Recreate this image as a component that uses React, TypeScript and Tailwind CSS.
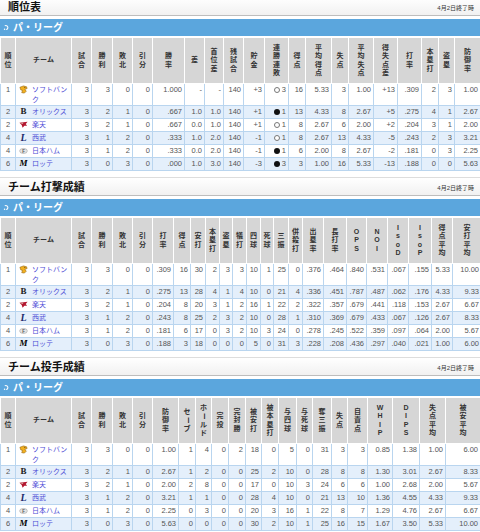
import type { ReactNode } from "react";

type Col = { label: string; w: string; flat?: boolean };
type Logo = "sb" | "bs" | "e" | "l" | "f" | "m";
type Row = { rank: string; team: string; logo: Logo; cells: string[] };

const BASE_COLS: Col[] = [
  { label: "順位", w: "w-[15px]" },
  { label: "チーム", w: "w-[56px]", flat: true },
  { label: "試合", w: "w-[20px]" },
  { label: "勝利", w: "w-[21px]" },
  { label: "敗北", w: "w-[20px]" },
  { label: "引分", w: "w-[20px]" },
];

const STANDING_COLS: Col[] = [
  ...BASE_COLS,
  { label: "勝率", w: "w-[32px]" },
  { label: "差", w: "w-[20px]" },
  { label: "首位差", w: "w-[19px]" },
  { label: "残試合", w: "w-[20px]" },
  { label: "貯金", w: "w-[21px]" },
  { label: "連勝連敗", w: "w-[24px]" },
  { label: "得点", w: "w-[17px]" },
  { label: "平均得点", w: "w-[26px]" },
  { label: "失点", w: "w-[17px]" },
  { label: "平均失点", w: "w-[25px]" },
  { label: "得失点差", w: "w-[24px]" },
  { label: "打率", w: "w-[24px]" },
  { label: "本塁打", w: "w-[17px]" },
  { label: "盗塁", w: "w-[16px]" },
  { label: "防御率", w: "w-[26px]" },
];

const BATTING_COLS: Col[] = [
  ...BASE_COLS,
  { label: "打率", w: "w-[21px]" },
  { label: "得点", w: "w-[17px]" },
  { label: "安打", w: "w-[15px]" },
  { label: "本塁打", w: "w-[14px]" },
  { label: "盗塁", w: "w-[13px]" },
  { label: "犠打", w: "w-[14px]" },
  { label: "四球", w: "w-[14px]" },
  { label: "死球", w: "w-[13px]" },
  { label: "三振", w: "w-[15px]" },
  { label: "併殺打", w: "w-[14px]" },
  { label: "出塁率", w: "w-[21px]" },
  { label: "長打率", w: "w-[23px]" },
  { label: "OPS", w: "w-[20px]" },
  { label: "NOI", w: "w-[21px]" },
  { label: "IsoD", w: "w-[21px]" },
  { label: "IsoP", w: "w-[23px]" },
  { label: "得点平均", w: "w-[21px]" },
  { label: "安打平均", w: "w-[29px]" },
];

const PITCHING_COLS: Col[] = [
  ...BASE_COLS,
  { label: "防御率", w: "w-[26px]" },
  { label: "セーブ", w: "w-[17px]" },
  { label: "ホールド", w: "w-[16px]" },
  { label: "完投", w: "w-[17px]" },
  { label: "完封勝", w: "w-[17px]" },
  { label: "被安打", w: "w-[16px]" },
  { label: "被本塁打", w: "w-[17px]" },
  { label: "与四球", w: "w-[18px]" },
  { label: "与死球", w: "w-[16px]" },
  { label: "奪三振", w: "w-[19px]" },
  { label: "失点", w: "w-[16px]" },
  { label: "自責点", w: "w-[20px]" },
  { label: "WHIP", w: "w-[25px]" },
  { label: "DIPS", w: "w-[27px]" },
  { label: "失点平均", w: "w-[26px]" },
  { label: "被安平均", w: "w-[35px]" },
];

const TEAMS: { rank: string; team: string; logo: Logo }[] = [
  { rank: "1", team: "ソフトバンク", logo: "sb" },
  { rank: "2", team: "オリックス", logo: "bs" },
  { rank: "2", team: "楽天", logo: "e" },
  { rank: "4", team: "西武", logo: "l" },
  { rank: "4", team: "日本ハム", logo: "f" },
  { rank: "6", team: "ロッテ", logo: "m" },
];

const STANDING_DATA = [
  "3 3 0 0 1.000 - - 140 +3 ○3 16 5.33 3 1.00 +13 .309 2 3 1.00",
  "3 2 1 0 .667 1.0 1.0 140 +1 ●1 13 4.33 8 2.67 +5 .275 4 1 2.67",
  "3 2 1 0 .667 0.0 1.0 140 +1 ○1 8 2.67 6 2.00 +2 .204 3 1 2.00",
  "3 1 2 0 .333 1.0 2.0 140 -1 ○1 8 2.67 13 4.33 -5 .243 2 3 3.21",
  "3 1 2 0 .333 0.0 2.0 140 -1 ●1 6 2.00 8 2.67 -2 .181 0 3 2.25",
  "3 0 3 0 .000 1.0 3.0 140 -3 ●3 3 1.00 16 5.33 -13 .188 0 0 5.63",
];

const BATTING_DATA = [
  "3 3 0 0 .309 16 30 2 3 3 10 1 25 0 .376 .464 .840 .531 .067 .155 5.33 10.00",
  "3 2 1 0 .275 13 28 4 1 4 10 0 21 4 .336 .451 .787 .487 .062 .176 4.33 9.33",
  "3 2 1 0 .204 8 20 3 1 2 16 1 22 2 .322 .357 .679 .441 .118 .153 2.67 6.67",
  "3 1 2 0 .243 8 25 2 3 2 10 0 28 1 .310 .369 .679 .433 .067 .126 2.67 8.33",
  "3 1 2 0 .181 6 17 0 3 2 10 3 24 0 .278 .245 .522 .359 .097 .064 2.00 5.67",
  "3 0 3 0 .188 3 18 0 0 0 5 0 31 3 .228 .208 .436 .297 .040 .021 1.00 6.00",
];

const PITCHING_DATA = [
  "3 3 0 0 1.00 1 4 0 2 18 0 5 0 31 3 3 0.85 1.38 1.00 6.00",
  "3 2 1 0 2.67 1 2 0 0 25 2 10 0 28 8 8 1.30 3.01 2.67 8.33",
  "3 2 1 0 2.00 2 8 0 0 17 0 10 3 24 6 6 1.00 2.68 2.00 5.67",
  "3 1 2 0 3.21 1 1 0 0 28 4 10 0 21 13 10 1.36 4.55 4.33 9.33",
  "3 1 2 0 2.25 0 3 0 0 20 3 16 1 22 8 7 1.29 4.76 2.67 6.67",
  "3 0 3 0 5.63 0 0 0 0 30 2 10 1 25 16 15 1.67 3.50 5.33 10.00",
];

function toRows(data: string[]): Row[] {
  return data.map((line, i) => ({ ...TEAMS[i], cells: line.split(" ") }));
}

function TeamLogo({ kind }: { kind: Logo }) {
  if (kind === "sb")
    return (
      <svg viewBox="0 0 10 10" className="h-[9px] w-[9px] shrink-0">
        <path d="M1 2.5 L5 1 L8.5 2 L9 4 L6.5 4.5 L8 7 L6 9 L3 8.5 L4 6 L2 5.5 Z" fill="#f2b01e" stroke="#8c5c0c" strokeWidth="0.6" />
        <circle cx="6.5" cy="2.6" r="0.6" fill="#5a3a00" />
      </svg>
    );
  if (kind === "e")
    return (
      <svg viewBox="0 0 10 10" className="h-[9px] w-[9px] shrink-0">
        <path d="M0.5 3 L9.5 2 L7.5 4.5 L9 6.5 L6 6.5 L4 8.5 L3 5.5 Z" fill="#b3172f" />
        <path d="M1 3.2 L5 3 L4 4.5 Z" fill="#d8b0a8" />
      </svg>
    );
  if (kind === "f")
    return (
      <svg viewBox="0 0 10 10" className="h-[9px] w-[9px] shrink-0">
        <ellipse cx="5" cy="5.5" rx="4.3" ry="2.8" fill="#e6e6e6" stroke="#9a9a9a" strokeWidth="0.6" />
        <text x="5" y="7.3" textAnchor="middle" fontSize="5" fontWeight="700" fill="#555" fontFamily="Liberation Sans, sans-serif">F</text>
      </svg>
    );
  if (kind === "bs")
    return <span className="h-[9px] w-[9px] shrink-0 text-center font-['Liberation_Serif',serif] text-[9px] font-bold leading-[9px] text-[#222]">B</span>;
  if (kind === "l")
    return <span className="h-[9px] w-[9px] shrink-0 text-center font-['Liberation_Serif',serif] text-[10px] font-bold italic leading-[9px] text-[#1b2a6b]">L</span>;
  return <span className="h-[9px] w-[9px] shrink-0 text-center font-['Liberation_Serif',serif] text-[9px] font-bold italic leading-[9px] text-black">M</span>;
}

function HeaderLabel({ col }: { col: Col }) {
  if (col.flat) return <>{col.label}</>;
  return (
    <>
      {col.label.split("").map((ch, i) => (
        <span key={i} className="block">
          {ch === "ー" ? <span className="inline-block rotate-90">ー</span> : ch}
        </span>
      ))}
    </>
  );
}

function Cell({ value }: { value: string }) {
  let content: ReactNode = value;
  if (value.startsWith("○") || value.startsWith("●")) {
    const filled = value.startsWith("●");
    content = (
      <span className="inline-flex h-[10px] items-center gap-[2px] align-top">
        <span
          className={
            filled
              ? "inline-block h-[6px] w-[6px] rounded-full bg-[#111]"
              : "inline-block h-[6px] w-[6px] rounded-full border-[0.8px] border-[#777] bg-white"
          }
        />
        {value.slice(1)}
      </span>
    );
  }
  return (
    <td className="h-[12px] overflow-hidden border border-[#b9d5ef] py-px pr-[2px] pl-0 text-right align-top text-[7.5px] leading-[10px] text-[#555]">
      {content}
    </td>
  );
}

function StatTable({ cols, rows }: { cols: Col[]; rows: Row[] }) {
  return (
    <table className="mt-px w-[480px] table-fixed border-collapse">
      <colgroup>
        {cols.map((c) => (
          <col key={c.label} className={c.w} />
        ))}
      </colgroup>
      <thead>
        <tr>
          {cols.map((c) => (
            <th
              key={c.label}
              className="h-[46px] border border-white bg-[#d6d6d6] p-0 text-center align-middle text-[7px] font-bold leading-[8.4px] text-[#333]"
            >
              <HeaderLabel col={c} />
            </th>
          ))}
        </tr>
      </thead>
      <tbody>
        {rows.map((r, i) => (
          <tr key={r.team} className={i % 2 === 1 ? "bg-[#e4effb]" : "bg-white"}>
            <td className="h-[12px] border border-[#b9d5ef] py-px text-center align-top text-[7.5px] leading-[10px] text-[#555]">{r.rank}</td>
            <td className="h-[12px] border border-[#b9d5ef] py-px pr-[1px] pl-[3px] align-top">
              <div className="flex items-start gap-[4px]">
                <TeamLogo kind={r.logo} />
                <span className="text-[7px] leading-[9.5px] text-[#4d4dd6]">{r.team}</span>
              </div>
            </td>
            {r.cells.map((v, j) => (
              <Cell key={j} value={v} />
            ))}
          </tr>
        ))}
      </tbody>
    </table>
  );
}

function Section({ title, cols, rows, first }: { title: string; cols: Col[]; rows: Row[]; first?: boolean }) {
  return (
    <section className={first ? "" : "mt-[6px]"}>
      <div className="flex h-[19px] items-center justify-between border-t border-b border-t-[#dddddd] border-b-[#bdbdbd] bg-linear-to-b from-white to-[#f1f1f1] pr-[6px] pl-[8px]">
        <h2 className="pt-[2px] text-[11px] font-bold leading-none text-[#111]">{title}</h2>
        <span className="pt-[2px] text-[6px] leading-none text-[#333]">4月2日終了時</span>
      </div>
      <div className="mt-[3px] flex h-[17px] items-center gap-[3px] bg-[#5ba6dd] pl-[3px]">
        <svg viewBox="0 0 8 8" className="h-[7px] w-[7px]">
          <path d="M2 2.2 A2.3 2.3 0 1 1 3.6 6.4" fill="none" stroke="white" strokeWidth="1.2" />
          <circle cx="1.8" cy="6" r="0.9" fill="white" />
        </svg>
        <span className="text-[10px] font-bold leading-none text-white">パ・リーグ</span>
      </div>
      <StatTable cols={cols} rows={rows} />
    </section>
  );
}

export default function App() {
  return (
    <div className="-mt-[3px] w-[480px] bg-white font-['Liberation_Sans','Noto_Sans_CJK_JP',sans-serif]">
      <Section first title="順位表" cols={STANDING_COLS} rows={toRows(STANDING_DATA)} />
      <Section title="チーム打撃成績" cols={BATTING_COLS} rows={toRows(BATTING_DATA)} />
      <Section title="チーム投手成績" cols={PITCHING_COLS} rows={toRows(PITCHING_DATA)} />
    </div>
  );
}
